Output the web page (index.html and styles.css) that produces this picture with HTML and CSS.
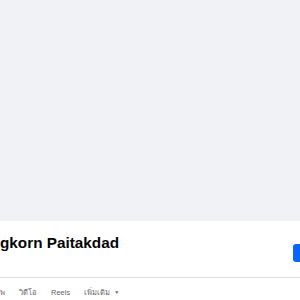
FILE: index.html
```html
<!DOCTYPE html>
<html lang="th">
<head>
    <meta charset="UTF-8">
    <title>Profile</title>
    <link rel="stylesheet" href="styles.css">
</head>
<body>
    <div class="cover"></div>
    <section class="profile">
        <div class="profile-head">
            <h1 class="name">gkorn Paitakdad</h1>
            <button class="action"></button>
        </div>
        <nav class="tabs">
            <span class="tab tab-cut">รูปภาพ</span>
            <span class="tab">วิดีโอ</span>
            <span class="tab">Reels</span>
            <span class="tab">เพิ่มเติม <span class="caret">▼</span></span>
        </nav>
    </section>
</body>
</html>
```

FILE: styles.css
```css
html,
body {
    margin: 0;
    padding: 0;
    height: 100%;
    overflow: hidden;
    background-color: #ffffff;
    font-family: "Liberation Sans", "Noto Sans", sans-serif;
}

.cover {
    height: 221px;
    background-color: #f0f2f5;
}

.profile {
    background-color: #ffffff;
}

.profile-head {
    display: flex;
    justify-content: space-between;
    align-items: flex-start;
    height: 56px;
    border-bottom: 1px solid #dadde1;
}

.name {
    margin: 13px 0 0 0;
    font-size: 15.3px;
    font-weight: bold;
    color: #050505;
    line-height: 18px;
}

.action {
    width: 7px;
    height: 18px;
    margin-top: 23px;
    padding: 0;
    border: none;
    border-radius: 3px 0 0 3px;
    background-color: #0866ff;
}

.tabs {
    display: flex;
    align-items: baseline;
    gap: 14px;
    padding-top: 9px;
    font-size: 7.5px;
    line-height: 10px;
    color: #65676b;
}

.tab-cut {
    margin-left: -18px;
}

.caret {
    font-size: 5px;
    margin-left: 2px;
    vertical-align: 1px;
}
```
